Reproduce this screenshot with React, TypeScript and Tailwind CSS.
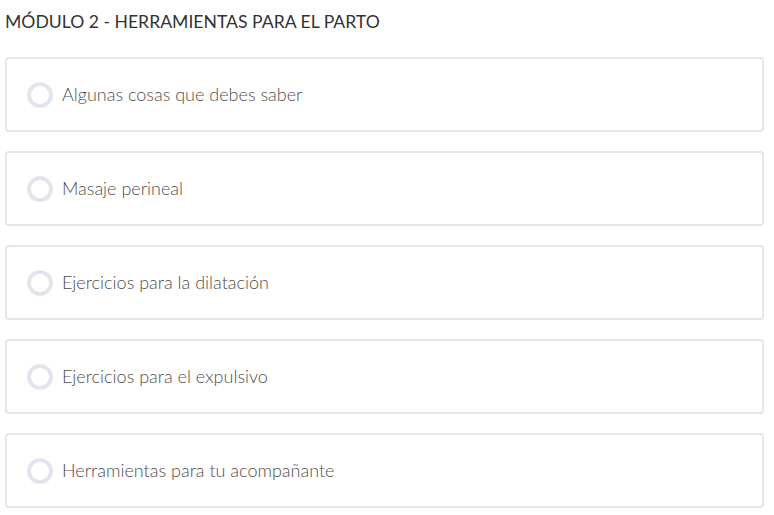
import React from 'react'

const lessons = [
  'Algunas cosas que debes saber',
  'Masaje perineal',
  'Ejercicios para la dilatación',
  'Ejercicios para el expulsivo',
  'Herramientas para tu acompañante',
]

export default function App() {
  return (
    <div className="min-h-screen bg-white px-[5px] pt-[10px] font-['Lato',sans-serif]">
      <h2 className="text-[17.6px] leading-[24px] text-[#333]">MÓDULO 2 - HERRAMIENTAS PARA EL PARTO</h2>
      <div className="mt-[23px] mr-[5px] flex flex-col gap-[19px]">
        {lessons.map((l) => (
          <div key={l} className="flex h-[75px] items-center rounded-[4px] border-2 border-[#e3e6eb] pl-[20px]">
            <span className="h-[26px] w-[26px] rounded-full border-[4px] border-[#e2e6ec]" />
            <span className="ml-[9px] text-[18px] font-light text-[#4e4e4e]">{l}</span>
          </div>
        ))}
      </div>
    </div>
  )
}
